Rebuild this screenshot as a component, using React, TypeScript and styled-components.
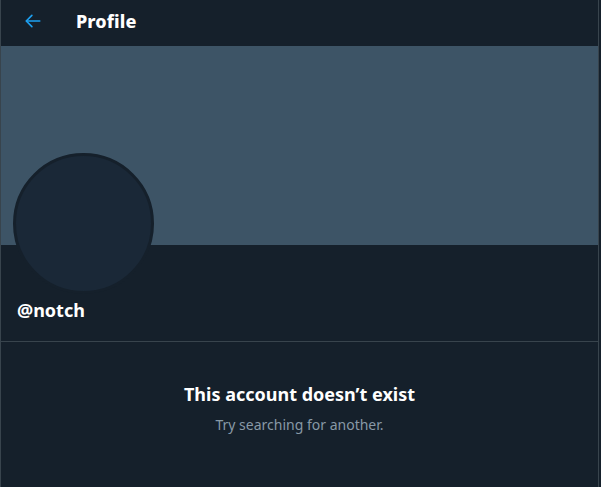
import React from 'react';
import styled, { createGlobalStyle } from 'styled-components';

const Global = createGlobalStyle`
  html, body {
    margin: 0;
    padding: 0;
    background: #15202b;
  }
  body {
    font-family: "Noto Sans", "Open Sans", sans-serif;
  }
`;

const Page = styled.div`
  width: 597px;
  height: 487px;
  border-left: 1px solid #38444d;
  border-right: 1px solid #38444d;
  background: #15202b;
  display: flex;
  flex-direction: column;
  overflow: hidden;
`;

const Header = styled.header`
  height: 46px;
  display: flex;
  align-items: center;
  padding: 0 0 4px 20px;
  gap: 31px;
  box-sizing: border-box;
`;

const BackButton = styled.button`
  background: none;
  border: none;
  padding: 0;
  width: 24px;
  height: 24px;
  display: flex;
  align-items: center;
  justify-content: center;
  color: #1da1f2;
  cursor: pointer;
`;

const Title = styled.h1`
  margin: 0;
  font-size: 18px;
  font-weight: 800;
  color: #ffffff;
  letter-spacing: 0.1px;
`;

const Banner = styled.div`
  height: 199px;
  background: #3d5466;
`;

const ProfileInfo = styled.div`
  padding: 0 16px 0 12px;
  height: 96px;
  border-bottom: 1px solid #38444d;
`;

const Avatar = styled.div`
  width: 135px;
  height: 135px;
  margin-top: -92px;
  border-radius: 50%;
  background: #1a2837;
  border: 3px solid #15202b;
`;

const Handle = styled.div`
  margin: 4px 0 0 4px;
  font-size: 18px;
  font-weight: 700;
  color: #ffffff;
`;

const Empty = styled.div`
  display: flex;
  flex-direction: column;
  align-items: center;
  padding-top: 40px;
`;

const EmptyTitle = styled.div`
  font-size: 18px;
  font-weight: 700;
  color: #ffffff;
`;

const EmptyText = styled.div`
  margin-top: 9px;
  font-size: 14px;
  color: #8899a6;
`;

const ArrowIcon = () => (
  <svg width="18" height="18" viewBox="0 0 24 24" fill="none" stroke="currentColor" strokeWidth="2.2" strokeLinecap="round" strokeLinejoin="round">
    <path d="M21 12H3.5" />
    <path d="M10.5 4.5L3 12l7.5 7.5" />
  </svg>
);

const App: React.FC = () => {
  return (
    <>
      <Global />
      <Page>
        <Header>
          <BackButton aria-label="Back">
            <ArrowIcon />
          </BackButton>
          <Title>Profile</Title>
        </Header>
        <Banner />
        <ProfileInfo>
          <Avatar />
          <Handle>@notch</Handle>
        </ProfileInfo>
        <Empty>
          <EmptyTitle>This account doesn’t exist</EmptyTitle>
          <EmptyText>Try searching for another.</EmptyText>
        </Empty>
      </Page>
    </>
  );
};

export default App;
